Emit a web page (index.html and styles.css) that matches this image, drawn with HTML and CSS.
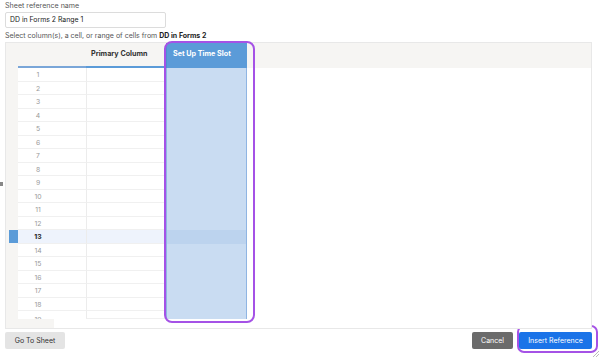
FILE: index.html
```html
<!DOCTYPE html>
<html lang="en">
<head>
    <meta charset="UTF-8">
    <title>Insert Reference</title>
    <link rel="stylesheet" href="styles.css">
</head>
<body>
    <div class="dialog">
        <div class="field-label">Sheet reference name</div>
        <div class="name-input">DD in Forms 2 Range 1</div>
        <div class="hint">Select column(s), a cell, or range of cells from <b>DD in Forms 2</b></div>

        <div class="grid-wrap">
            <div class="grid">
                <div class="gutter">
                    <div class="row-marker"></div>
                </div>
                <div class="sheet">
                    <div class="head">
                        <div class="col-num head-cell underline"></div>
                        <div class="col-primary head-cell underline">Primary Column</div>
                        <div class="col-sel head-cell selected-head">Set Up Time Slot</div>
                        <div class="head-rest"></div>
                    </div>
                    <div class="rows">
                        <div class="row"><div class="col-num">1</div><div class="col-primary"></div><div class="col-sel"></div></div>
                        <div class="row"><div class="col-num">2</div><div class="col-primary"></div><div class="col-sel"></div></div>
                        <div class="row"><div class="col-num">3</div><div class="col-primary"></div><div class="col-sel"></div></div>
                        <div class="row"><div class="col-num">4</div><div class="col-primary"></div><div class="col-sel"></div></div>
                        <div class="row"><div class="col-num">5</div><div class="col-primary"></div><div class="col-sel"></div></div>
                        <div class="row"><div class="col-num">6</div><div class="col-primary"></div><div class="col-sel"></div></div>
                        <div class="row"><div class="col-num">7</div><div class="col-primary"></div><div class="col-sel"></div></div>
                        <div class="row"><div class="col-num">8</div><div class="col-primary"></div><div class="col-sel"></div></div>
                        <div class="row"><div class="col-num">9</div><div class="col-primary"></div><div class="col-sel"></div></div>
                        <div class="row"><div class="col-num">10</div><div class="col-primary"></div><div class="col-sel"></div></div>
                        <div class="row"><div class="col-num">11</div><div class="col-primary"></div><div class="col-sel"></div></div>
                        <div class="row"><div class="col-num">12</div><div class="col-primary"></div><div class="col-sel"></div></div>
                        <div class="row active"><div class="col-num">13</div><div class="col-primary"></div><div class="col-sel"></div></div>
                        <div class="row"><div class="col-num">14</div><div class="col-primary"></div><div class="col-sel"></div></div>
                        <div class="row"><div class="col-num">15</div><div class="col-primary"></div><div class="col-sel"></div></div>
                        <div class="row"><div class="col-num">16</div><div class="col-primary"></div><div class="col-sel"></div></div>
                        <div class="row"><div class="col-num">17</div><div class="col-primary"></div><div class="col-sel"></div></div>
                        <div class="row"><div class="col-num">18</div><div class="col-primary"></div><div class="col-sel"></div></div>
                        <div class="row partial"><div class="col-num">19</div><div class="col-primary"></div><div class="col-sel"></div></div>
                    </div>
                </div>
            </div>
            <div class="scroll-strip"><div class="scroll-thumb"></div></div>
            <div class="focus-ring column-ring"></div>
            <div class="edge-tab"></div>
        </div>

        <div class="footer">
            <button class="btn btn-light">Go To Sheet</button>
            <div class="footer-right">
                <button class="btn btn-dark">Cancel</button>
                <div class="btn-ring">
                    <button class="btn btn-primary">Insert Reference</button>
                </div>
            </div>
        </div>
        <div class="resize-grip"></div>
    </div>
</body>
</html>
```

FILE: styles.css
```css
body, html {
    margin: 0;
    padding: 0;
    background-color: #ffffff;
    font-family: Inter, "Noto Sans", sans-serif;
    color: #222;
    width: 600px;
    height: 358px;
    overflow: hidden;
}
.dialog {
    position: relative;
    height: 358px;
    padding: 0 8px 0 5px;
    box-sizing: border-box;
}
.field-label {
    font-size: 7.1px;
    color: #555;
    line-height: 10px;
    padding-top: 1px;
}
.name-input {
    margin-top: 1px;
    width: 161px;
    height: 16px;
    box-sizing: border-box;
    border: 1px solid #dcdcdc;
    border-radius: 2px;
    font-size: 6.9px;
    line-height: 14px;
    padding-left: 4px;
    color: #222;
}
.hint {
    font-size: 7px;
    color: #555;
    line-height: 10px;
    margin-top: 3px;
}
.hint b {
    color: #222;
    font-weight: 700;
}
.grid-wrap {
    position: relative;
    margin-top: 1px;
    width: 587px;
    height: 286px;
}
.grid {
    display: flex;
    height: 276px;
    border: 1px solid #e8e8e8;
    border-bottom: none;
    background-color: #ffffff;
    overflow: hidden;
}
.gutter {
    width: 12px;
    flex-shrink: 0;
    background-color: #f6f5f3;
    position: relative;
}
.row-marker {
    position: absolute;
    left: 3px;
    top: 187px;
    width: 9px;
    height: 13px;
    background-color: #5b9bd8;
}
.sheet {
    flex: 1;
    display: flex;
    flex-direction: column;
}
.head {
    display: flex;
    height: 25px;
    flex-shrink: 0;
    background-color: #f6f5f3;
}
.head-cell {
    box-sizing: border-box;
    font-size: 7.2px;
    font-weight: 700;
    padding: 6px 0 0 5px;
    color: #333;
}
.underline {
    border-bottom: 2px solid #5b9bd8;
}
.head .col-num {
    border-bottom-color: #7aa6d8;
}
.selected-head {
    background-color: #5b9bd8;
    color: #ffffff;
    border-left: 1px solid #4f8fd0;
    padding-left: 6px;
}
.head-rest {
    flex: 1;
}
.col-num {
    width: 68px;
    flex-shrink: 0;
}
.col-primary {
    width: 80px;
    flex-shrink: 0;
}
.col-sel {
    width: 81px;
    flex-shrink: 0;
    box-sizing: border-box;
}
.rows {
    flex: 1;
    overflow: hidden;
}
.row {
    display: flex;
    height: 13.5px;
}
.row.partial {
    height: 8px;
    overflow: hidden;
}
.row .col-num {
    box-sizing: border-box;
    font-size: 6.8px;
    color: #999;
    line-height: 13px;
    padding-right: 28px;
    text-align: center;
    border-bottom: 1px solid #f0f0f0;
}
.row.partial .col-num {
    line-height: 17px;
    border-bottom: none;
}
.row .col-primary {
    border-left: 1px solid #ececec;
    border-bottom: 1px solid #f0f0f0;
    box-sizing: border-box;
}
.row .col-sel {
    background-color: #c9dcf2;
    border-left: 1px solid #8fb5e3;
    border-right: 1px solid #8fb5e3;
}
.row.active .col-num,
.row.active .col-primary {
    background-color: #eef3fc;
}
.row.active .col-num {
    color: #222;
    font-weight: 700;
}
.row.active .col-sel {
    background-color: #bcd3ee;
}
.scroll-strip {
    height: 9px;
    border: 1px solid #e8e8e8;
    border-top: none;
    background-color: #ffffff;
}
.scroll-thumb {
    width: 48px;
    height: 9px;
    background-color: #f6f5f3;
}
.focus-ring {
    position: absolute;
    border: 2px solid #a552e6;
    border-radius: 8px;
    box-sizing: border-box;
}
.column-ring {
    left: 159px;
    top: -1px;
    width: 91px;
    height: 282px;
}
.edge-tab {
    position: absolute;
    left: -5px;
    top: 140px;
    width: 3px;
    height: 4px;
    background-color: #888;
}
.footer {
    display: flex;
    justify-content: space-between;
    align-items: flex-start;
    margin-top: 4px;
}
.footer-right {
    display: flex;
    align-items: flex-start;
    gap: 4px;
}
.btn {
    border: none;
    border-radius: 2px;
    font-family: Inter, "Noto Sans", sans-serif;
    font-size: 7px;
    height: 17px;
    padding: 0;
    cursor: pointer;
}
.btn-light {
    background-color: #e4e4e4;
    color: #333;
    width: 60px;
}
.btn-dark {
    background-color: #6b6b6b;
    color: #ffffff;
    width: 41px;
}
.btn-primary {
    background-color: #1a73e8;
    color: #ffffff;
    width: 73px;
    display: block;
}
.btn-ring {
    border: 2px solid #a552e6;
    border-radius: 7px;
    padding: 5px 4px 2px 0;
    margin: -7px -6px 0 0;
}
.resize-grip {
    position: absolute;
    right: 1px;
    bottom: 1px;
    width: 6px;
    height: 6px;
    background: linear-gradient(135deg, transparent 45%, #bbb 45%, #bbb 55%, transparent 55%, transparent 70%, #bbb 70%, #bbb 80%, transparent 80%);
}
```
